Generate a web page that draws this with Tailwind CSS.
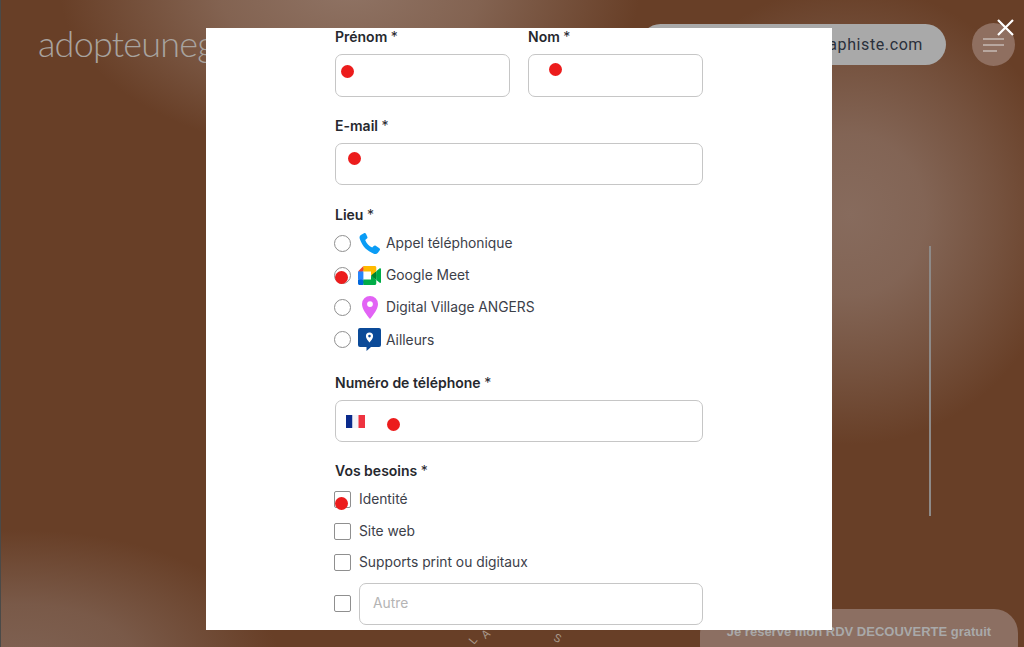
<!DOCTYPE html>
<html lang="fr">
<head>
    <meta charset="UTF-8">
    <meta name="viewport" content="width=device-width, initial-scale=1.0">
    <title>Réserver un RDV</title>
    <script src="https://cdn.jsdelivr.net/npm/@tailwindcss/browser@4"></script>
</head>
<body class="font-['Inter',sans-serif]">
    <div class="relative w-[1024px] h-[647px] overflow-hidden bg-[#683f27]">
        <!-- background glows -->
        <div class="absolute inset-0 bg-[radial-gradient(ellipse_290px_165px_at_350px_-10px,#8f7364_0%,#8f7364b0_45%,#8f736400_100%),radial-gradient(ellipse_215px_230px_at_850px_215px,#876b5d_0%,#876b5dd8_35%,#876b5d70_68%,#876b5d00_100%),radial-gradient(ellipse_260px_135px_at_20px_665px,#7f6253_0%,#7f6253c0_45%,#7f625300_100%)]"></div>
        <div class="absolute left-0 top-0 w-[1px] h-full bg-[#4a4a48]"></div>

        <!-- page behind the modal -->
        <header class="relative flex items-center justify-between h-[89px] pl-[38px] pr-[9px]">
            <span class="-mt-[3px] font-['Lato',sans-serif] font-light text-[36px] leading-none text-[#a8a39f] tracking-[-0.8px]">adopteunegraphiste</span>
            <div class="flex items-center gap-[26px]">
                <div class="flex items-center justify-end w-[306px] h-[41px] pr-[23px] rounded-full bg-[#a9a9a9] font-['Roboto',sans-serif] text-[16px] tracking-[0.6px] text-[#2a303b]">contact@adopteunegraphiste.com</div>
                <div class="flex flex-col justify-center gap-[4px] w-[43px] h-[43px] pl-[11px] rounded-full bg-[#8f6f60]">
                    <span class="block w-[21px] h-[2px] bg-[#b8a79f]"></span>
                    <span class="block w-[21px] h-[2px] bg-[#b8a79f]"></span>
                    <span class="block w-[14px] h-[2px] bg-[#b8a79f]"></span>
                </div>
            </div>
        </header>

        <div class="absolute left-[929px] top-[246px] w-[2px] h-[270px] bg-[#8e8a88]"></div>

        <span class="absolute left-[470px] top-[632px] rotate-[-50deg] text-[11px] text-[#a89789]">L</span>
        <span class="absolute left-[482px] top-[626px] rotate-[-40deg] text-[11px] text-[#a89789]">A</span>
        <span class="absolute left-[554px] top-[630px] rotate-[25deg] text-[11px] text-[#a89789]">S</span>

        <a class="absolute left-[700px] top-[609px] flex justify-center w-[318px] h-[60px] pt-[13px] rounded-[24px] bg-[#8c6f62] font-['Liberation_Sans',sans-serif] font-bold text-[13px] text-[#a9a9a9]">Je réserve mon RDV DECOUVERTE gratuit</a>

        <!-- modal -->
        <div class="absolute left-[206px] top-[28px] w-[626px] h-[602px] overflow-hidden bg-white pl-[129px] pr-[129px] text-[13.8px] text-[#3c4049]">
            <div class="flex gap-[18px]">
                <div class="w-[175px]">
                    <label class="block h-[18px] mb-[8px] text-[14px] leading-[18px] font-semibold text-[#26282e]">Prénom <span class="font-normal">*</span></label>
                    <div class="h-[43px] rounded-[7px] border border-[#c6c6c6]"></div>
                </div>
                <div class="w-[175px]">
                    <label class="block h-[18px] mb-[8px] text-[14px] leading-[18px] font-semibold text-[#26282e]">Nom <span class="font-normal">*</span></label>
                    <div class="h-[43px] rounded-[7px] border border-[#c6c6c6]"></div>
                </div>
            </div>

            <label class="block h-[18px] mt-[20px] mb-[8px] text-[14px] leading-[18px] font-semibold text-[#26282e]">E-mail <span class="font-normal">*</span></label>
            <div class="h-[42px] rounded-[7px] border border-[#c6c6c6]"></div>

            <label class="block h-[18px] mt-[21px] text-[14px] leading-[18px] font-semibold text-[#26282e]">Lieu <span class="font-normal">*</span></label>
            <div class="mt-[3px]">
                <div class="flex items-center h-[32.25px]">
                    <span class="-ml-[1px] w-[17px] h-[17px] rounded-full border-[1.5px] border-[#8f8f8f]"></span>
                    <span class="flex justify-center w-[23px] ml-[7px] mr-[5px]">
                        <svg width="23" height="23" viewBox="0 0 24 24"><path fill="#0a9cf5" d="M6.2 1.2 3 3.2C1.6 4.2 1.3 5.600 1.900 7.400c2.600 7.600 7.600 12.800 14.600 15.200 1.800.6 3.300.2 4.300-1l1.900-2.600c.5-.7.3-1.500-.4-2l-3.800-2.600c-.7-.5-1.500-.4-2.100.2l-1.600 1.700c-3.400-1.600-5.800-4.400-7.300-7.900l1.800-1.500c.6-.6.8-1.300.4-2L8.300 1.700c-.5-.8-1.300-1-2.100-.5z"/></svg>
                    </span>
                    <span>Appel téléphonique</span>
                </div>
                <div class="flex items-center h-[32.25px]">
                    <span class="-ml-[1px] w-[17px] h-[17px] rounded-full border-[1.5px] border-[#8f8f8f]"></span>
                    <span class="flex justify-center w-[23px] ml-[7px] mr-[5px]">
                        <svg width="23" height="19" viewBox="0 0 87.5 72">
                            <path fill="#00832d" d="M49.5 36l8.53 9.75 11.47 7.33 2-17.02-2-16.64-11.69 6.44z"/>
                            <path fill="#0066da" d="M0 51.5V66c0 3.315 2.685 6 6 6h14.5l3-10.96-3-9.54-9.95-3z"/>
                            <path fill="#e94235" d="M20.5 0L0 20.5l10.55 3 9.95-3 2.95-9.41z"/>
                            <path fill="#2684fc" d="M20.5 20.5H0v31h20.5z"/>
                            <path fill="#00ac47" d="M82.6 8.68L69.5 19.42v33.66l13.16 10.79c1.97 1.54 4.85.135 4.85-2.37V11c0-2.535-2.945-3.925-4.91-2.32zM49.5 36v15.5h-29V72h43c3.315 0 6-2.685 6-6V53.08z"/>
                            <path fill="#ffba00" d="M63.5 0h-43v20.5h29V36l20-16.57V6c0-3.315-2.685-6-6-6z"/>
                        </svg>
                    </span>
                    <span>Google Meet</span>
                </div>
                <div class="flex items-center h-[32.25px]">
                    <span class="-ml-[1px] w-[17px] h-[17px] rounded-full border-[1.5px] border-[#8f8f8f]"></span>
                    <span class="flex justify-center w-[23px] ml-[7px] mr-[5px]">
                        <svg width="16" height="23" viewBox="0 0 16 23"><path fill="#e263f5" fill-rule="evenodd" d="M8 0a8 8 0 0 0-8 8c0 5 4.800 11 8 15 3.200-4 8-10 8-15a8 8 0 0 0-8-8zm0 5.200a2.900 2.900 0 1 1 0 5.800 2.900 2.900 0 0 1 0-5.800z"/></svg>
                    </span>
                    <span>Digital Village ANGERS</span>
                </div>
                <div class="flex items-center h-[32.25px]">
                    <span class="-ml-[1px] w-[17px] h-[17px] rounded-full border-[1.5px] border-[#8f8f8f]"></span>
                    <span class="flex justify-center w-[23px] ml-[7px] mr-[5px]">
                        <svg width="23" height="23" viewBox="0 0 23 23"><path fill="#0b4a98" fill-rule="evenodd" d="M2 0h19a2 2 0 0 1 2 2v15a2 2 0 0 1-2 2h-8l-4.500 4V19H2a2 2 0 0 1-2-2V2a2 2 0 0 1 2-2zm9.500 4.500A3.600 3.600 0 0 0 7.900 8c0 2.400 2 4.600 3.600 6.500 1.600-1.900 3.600-4.100 3.600-6.500a3.600 3.600 0 0 0-3.600-3.500zm0 2.300a1.300 1.300 0 1 1 0 2.600 1.300 1.300 0 0 1 0-2.600z"/></svg>
                    </span>
                    <span>Ailleurs</span>
                </div>
            </div>

            <label class="block h-[18px] mt-[18px] mb-[8px] text-[14px] leading-[18px] font-semibold text-[#26282e]">Numéro de téléphone <span class="font-normal">*</span></label>
            <div class="flex items-center h-[42px] pl-[10px] rounded-[7px] border border-[#c6c6c6]">
                <svg width="19" height="13" viewBox="0 0 19 13"><rect width="6.500" height="13" fill="#0a2a8c"/><rect x="6.500" width="6" height="13" fill="#f4f4f8"/><rect x="12.500" width="6.500" height="13" fill="#ee3340"/></svg>
            </div>

            <label class="block h-[18px] mt-[20px] text-[14px] leading-[18px] font-semibold text-[#26282e]">Vos besoins <span class="font-normal">*</span></label>
            <div class="mt-[4px]">
                <div class="flex items-center gap-[8px] h-[31.5px]">
                    <span class="-ml-[1px] w-[17px] h-[17px] rounded-[2px] border-[1.5px] border-[#8f8f8f]"></span>
                    <span>Identité</span>
                </div>
                <div class="flex items-center gap-[8px] h-[31.5px]">
                    <span class="-ml-[1px] w-[17px] h-[17px] rounded-[2px] border-[1.5px] border-[#8f8f8f]"></span>
                    <span>Site web</span>
                </div>
                <div class="flex items-center gap-[8px] h-[31.5px]">
                    <span class="-ml-[1px] w-[17px] h-[17px] rounded-[2px] border-[1.5px] border-[#8f8f8f]"></span>
                    <span>Supports print ou digitaux</span>
                </div>
                <div class="flex items-center gap-[8px] mt-[4px]">
                    <span class="-ml-[1px] w-[17px] h-[17px] rounded-[2px] border-[1.5px] border-[#8f8f8f]"></span>
                    <div class="flex items-center flex-1 h-[42px] pl-[13px] rounded-[7px] border border-[#c6c6c6] text-[#b4b4b4]">Autre</div>
                </div>
            </div>
        </div>

        <!-- red markers over the form -->
        <span class="absolute left-[341px] top-[65px] w-[13px] h-[13px] rounded-full bg-[#ec1c1c]"></span>
        <span class="absolute left-[549px] top-[63px] w-[13px] h-[13px] rounded-full bg-[#ec1c1c]"></span>
        <span class="absolute left-[348px] top-[152px] w-[13px] h-[13px] rounded-full bg-[#ec1c1c]"></span>
        <span class="absolute left-[335px] top-[271px] w-[13px] h-[13px] rounded-full bg-[#ec1c1c]"></span>
        <span class="absolute left-[387px] top-[418px] w-[13px] h-[13px] rounded-full bg-[#ec1c1c]"></span>
        <span class="absolute left-[335px] top-[497px] w-[13px] h-[13px] rounded-full bg-[#ec1c1c]"></span>

        <!-- close -->
        <svg class="absolute left-[996px] top-[18px]" width="19" height="19" viewBox="0 0 19 19"><path d="M2 2l15 15M17 2L2 17" stroke="#fff" stroke-width="2.200"/></svg>
    </div>
</body>
</html>
